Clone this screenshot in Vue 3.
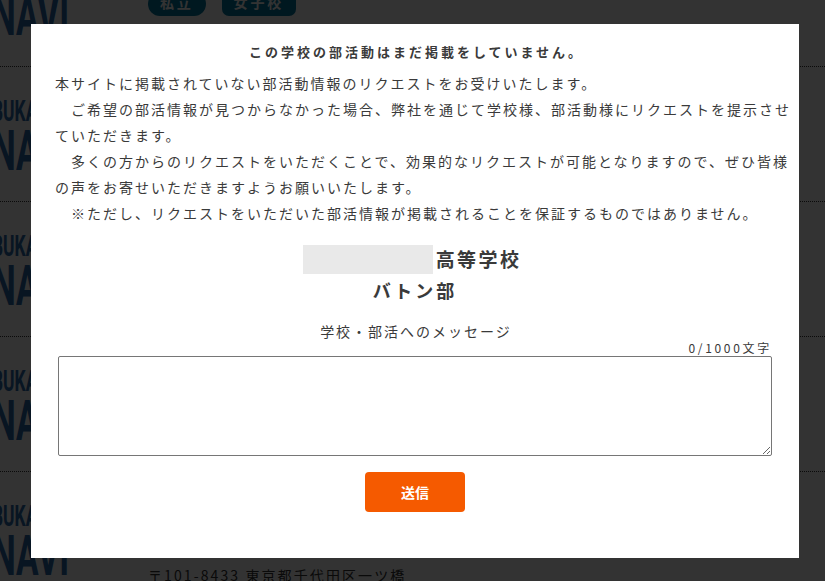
<template>
  <div class="page">
    <div class="row" v-for="(row, i) in rows" :key="i">
      <div class="logo">
        <span class="logo-top">BUKATSU</span>
        <span class="logo-bottom">NAVI</span>
      </div>
      <div class="row-body">
        <div class="chips" v-if="row.chips">
          <span class="chip" v-for="c in row.chips" :key="c">{{ c }}</span>
        </div>
        <p class="address" v-if="row.address">{{ row.address }}</p>
      </div>
    </div>
  </div>

  <div class="overlay">
    <div class="modal">
      <h2 class="title">この学校の部活動はまだ掲載をしていません。</h2>
      <div class="intro">
        <p>本サイトに掲載されていない部活動情報のリクエストをお受けいたします。</p>
        <p class="indent">ご希望の部活情報が見つからなかった場合、弊社を通じて学校様、部活動様にリクエストを提示させていただきます。</p>
        <p class="indent">多くの方からのリクエストをいただくことで、効果的なリクエストが可能となりますので、ぜひ皆様の声をお寄せいただきますようお願いいたします。</p>
        <p class="indent">※ただし、リクエストをいただいた部活情報が掲載されることを保証するものではありません。</p>
      </div>
      <div class="school">
        <div class="school-name"><span class="masked"></span>高等学校</div>
        <div class="club">バトン部</div>
      </div>
      <div class="form">
        <label class="msg-label" for="msg">学校・部活へのメッセージ</label>
        <div class="counter">{{ message.length }}/1000文字</div>
        <textarea id="msg" v-model="message" maxlength="1000"></textarea>
        <button class="send" type="button">送信</button>
      </div>
    </div>
  </div>
</template>

<script setup>
import { ref } from 'vue'

const message = ref('')
const rows = [
  { chips: ['私立', '女子校'] },
  {},
  {},
  {},
  { address: '〒101-8433 東京都千代田区一ツ橋' },
]
</script>

<style>
html, body { overflow: hidden; height: 100%; }
</style>

<style scoped>
.page {
  margin-top: -68px;
  background: #fff;
  font-family: "Noto Sans CJK JP", sans-serif;
  color: #333;
}
.row {
  height: 135px;
  box-sizing: border-box;
  display: flex;
  border-bottom: 1px dotted #333;
}
.row:last-child { border-bottom: 0; }
.logo {
  width: 156px;
  flex: none;
  margin-left: -8px;
  padding-top: 31px;
  color: #2a68a8;
  font-family: "Roboto", sans-serif;
  font-weight: 700;
  white-space: nowrap;
}
.logo-top {
  display: block;
  font-size: 30px;
  line-height: 26px;
  transform: scaleX(.58);
  transform-origin: left;
}
.logo-bottom {
  display: block;
  font-size: 56px;
  line-height: 44px;
  margin-top: 5px;
  transform: scaleX(.6);
  transform-origin: left;
}
.row-body { flex: 1; }
.chips { display: flex; gap: 16px; padding-top: 60px; }
.chip {
  display: block;
  height: 24px;
  line-height: 20px;
  padding: 0 12px;
  border-radius: 13px;
  background: #00779e;
  color: #fff;
  font-size: 14px;
  font-weight: 700;
  letter-spacing: .2em;
}
.chip + .chip { border-radius: 7px; }
.address {
  margin: 0;
  padding-top: 93px;
  font-size: 14px;
  letter-spacing: 2.1px;
  white-space: nowrap;
}

.overlay {
  position: fixed;
  inset: 0;
  background: rgba(0, 0, 0, .8);
}
.modal {
  margin: 24px 0 0 31px;
  width: 768px;
  height: 534px;
  box-sizing: border-box;
  padding: 17px 8px 0 24px;
  background: #fff;
  color: #3a3a3a;
  font-family: "Noto Sans CJK JP", sans-serif;
  font-size: 14px;
  letter-spacing: 2px;
}
.title {
  margin: 0 0 7px;
  padding-right: 13px;
  font-size: 13px;
  font-weight: 700;
  letter-spacing: 3px;
  line-height: 22px;
  text-align: center;
}
.intro p { margin: 0; line-height: 26px; }
.intro .indent { text-indent: 16px; }
.school {
  margin-top: 18px;
  padding-right: 16px;
  text-align: center;
  font-size: 18px;
  font-weight: 700;
  letter-spacing: 3px;
}
.school-name {
  line-height: 30px;
  padding-right: 6px;
  font-size: 19px;
  letter-spacing: 2.4px;
  display: flex;
  justify-content: center;
  align-items: center;
}
.masked {
  width: 130px;
  height: 29px;
  margin-right: 3px;
  background: #e9e9e9;
}
.club { line-height: 30px; margin-top: 1px; }
.form {
  margin-top: 15px;
  margin-left: 3px;
  width: 714px;
  display: flex;
  flex-direction: column;
  align-items: center;
}
.msg-label { line-height: 22px; padding-left: 2px; }
.counter {
  align-self: flex-end;
  font-size: 12px;
  line-height: 16px;
  margin-top: -2px;
  letter-spacing: 2.7px;
}
textarea {
  display: block;
  width: 714px;
  height: 100px;
  box-sizing: border-box;
  margin: 0;
  border: 1px solid #767676;
  border-radius: 2px;
  background: #fff;
  outline: none;
}
.send {
  margin-top: 16px;
  width: 100px;
  height: 40px;
  border: 0;
  border-radius: 4px;
  background: #f55a00;
  color: #fff;
  font-family: inherit;
  font-size: 14px;
  font-weight: 700;
}
</style>
